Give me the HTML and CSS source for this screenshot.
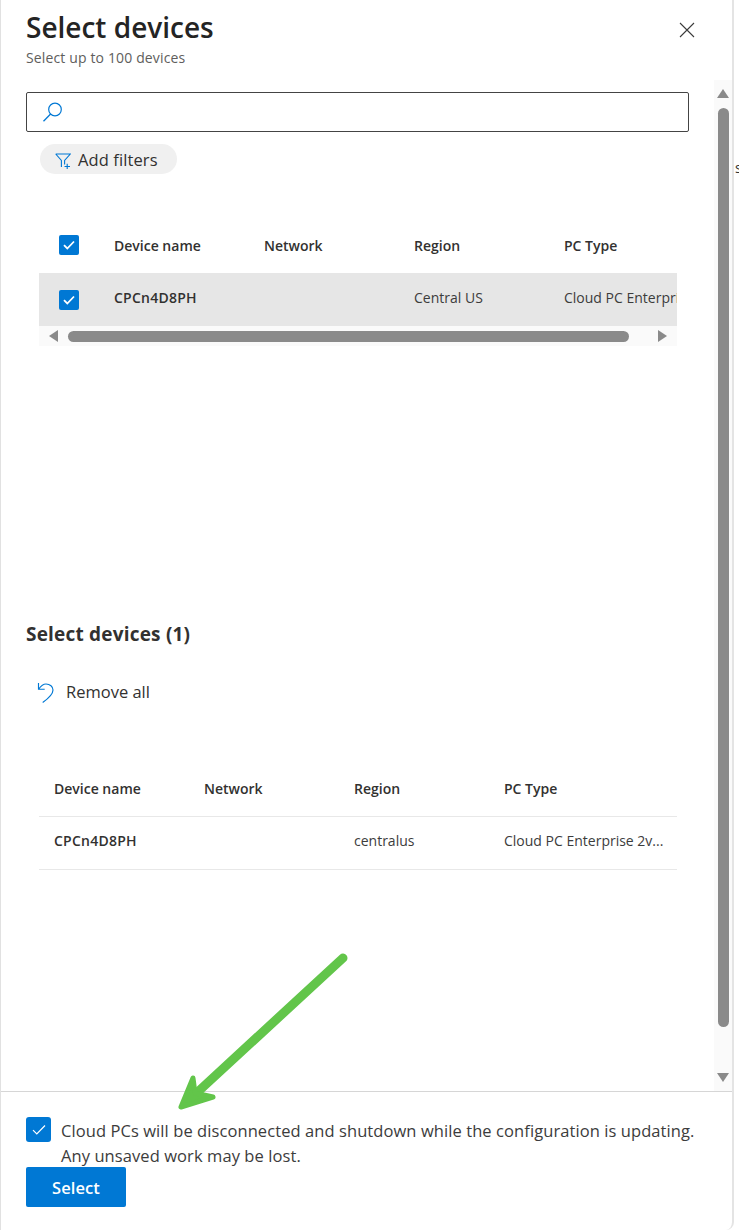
FILE: index.html
```html
<!DOCTYPE html>
<html lang="en">
<head>
<meta charset="utf-8">
<title>Select devices</title>
<link rel="stylesheet" href="styles.css">
</head>
<body>
<div class="page">
  <div class="panel">
    <header class="header">
      <div class="titles">
        <h1 class="title">Select devices</h1>
        <p class="subtitle">Select up to 100 devices</p>
      </div>
      <button class="close" aria-label="Close">
        <svg width="16" height="16" viewBox="0 0 16 16"><path d="M1 1l14 14M15 1L1 15" stroke="#3b3b3b" stroke-width="1.1" fill="none"/></svg>
      </button>
    </header>
    <div class="body">
      <main class="content">
        <div class="search">
          <svg class="search-icon" width="22" height="22" viewBox="0 0 22 22"><circle cx="13" cy="8.5" r="6.3" fill="none" stroke="#0078d4" stroke-width="1.2"/><path d="M8.6 13 1.5 20.3" stroke="#0078d4" stroke-width="1.3" fill="none"/></svg>
        </div>
        <button class="filter">
          <svg width="16" height="16" viewBox="0 0 16 16"><path d="M.7 1h14.6L9.6 7.4v4M6.4 13.9V7.4L.7 1" fill="none" stroke="#0078d4" stroke-width="1.1"/><path d="M9.5 13.500h5.500M12.200 10.800v5.200" stroke="#0078d4" stroke-width="1.1" fill="none"/></svg>
          <span>Add filters</span>
        </button>
        <div class="table top-table">
          <div class="row head-row">
            <span class="box"><svg width="12" height="10" viewBox="0 0 12 10"><path d="M1 5.200 4.300 8.500 11 1.500" fill="none" stroke="#fff" stroke-width="1.8"/></svg></span>
            <span class="cell name">Device name</span>
            <span class="cell">Network</span>
            <span class="cell">Region</span>
            <span class="cell">PC Type</span>
          </div>
          <div class="row data-row selected">
            <span class="box"><svg width="12" height="10" viewBox="0 0 12 10"><path d="M1 5.200 4.300 8.500 11 1.500" fill="none" stroke="#fff" stroke-width="1.8"/></svg></span>
            <span class="cell name strong">CPCn4D8PH</span>
            <span class="cell"></span>
            <span class="cell light">Central US</span>
            <span class="cell light clip">Cloud PC Enterprise 2vCPU/4GB/64GB</span>
          </div>
          <div class="hscroll">
            <span class="arrow-left"></span>
            <span class="hthumb"></span>
            <span class="arrow-right"></span>
          </div>
        </div>
        <h2 class="section">Select devices (1)</h2>
        <button class="remove">
          <svg width="18" height="21" viewBox="0 0 18 21"><path d="M1.500 1v6.200h6.200M1.700 7C4 3.800 6.500 2 9 2c4 0 7 2.800 7 6 0 3.500-4 8-10.300 12.500" fill="none" stroke="#0078d4" stroke-width="1.15"/></svg>
          <span>Remove all</span>
        </button>
        <div class="table bottom-table">
          <div class="row2 head2">
            <span class="cell">Device name</span>
            <span class="cell">Network</span>
            <span class="cell">Region</span>
            <span class="cell">PC Type</span>
          </div>
          <div class="row2 data2">
            <span class="cell strong">CPCn4D8PH</span>
            <span class="cell"></span>
            <span class="cell light">centralus</span>
            <span class="cell light">Cloud PC Enterprise 2v...</span>
          </div>
        </div>
      </main>
      <div class="vscroll">
        <span class="arrow-up"></span>
        <span class="vthumb"></span>
        <span class="arrow-down"></span>
      </div>
    </div>
    <footer class="footer">
      <div class="confirm">
        <span class="box big"><svg width="14" height="12" viewBox="0 0 14 12"><path d="M1 6.200 4.800 10 13 1.500" fill="none" stroke="#fff" stroke-width="1.2"/></svg></span>
        <p class="confirm-text">Cloud PCs will be disconnected and shutdown while the configuration is updating.<br>Any unsaved work may be lost.</p>
      </div>
      <button class="primary">Select</button>
    </footer>
    <svg class="callout" width="180" height="170" viewBox="0 0 180 170">
      <path d="M168 8 14 150" fill="none" stroke="#62c54a" stroke-width="9" stroke-linecap="round"/>
      <path d="M18 128 6 157 38 147 20 143Z" fill="#62c54a" stroke="#62c54a" stroke-width="5" stroke-linejoin="round"/>
    </svg>
  </div>
  <span class="stray">s</span>
</div>
</body>
</html>
```
FILE: styles.css
```css
* { box-sizing: border-box; }
html, body { margin: 0; padding: 0; }
body {
  background: #fff;
  font-family: "Open Sans", "Noto Sans", "Liberation Sans", sans-serif;
  color: #323130;
}
button { font-family: inherit; cursor: pointer; }
.page { position: relative; width: 739px; height: 1230px; overflow: hidden; }
.panel {
  position: relative;
  width: 734px;
  height: 1230px;
  background: #fff;
  border-left: 1px solid #e1e1e1;
  border-right: 2px solid #e4e4e4;
  border-bottom-right-radius: 8px;
  display: flex;
  flex-direction: column;
}
.header {
  height: 80px;
  flex: none;
  display: flex;
  justify-content: space-between;
  padding: 9px 37px 0 25px;
}
.title { margin: 0; font-size: 28px; line-height: 36px; font-weight: 600; color: #242424; }
.subtitle { margin: 3px 0 0; font-size: 14px; line-height: 20px; color: #605e5c; letter-spacing: 0.14px; }
.close { width: 16px; height: 16px; padding: 0; border: 0; background: none; margin-top: 13px; display: block; }
.close svg { display: block; }
.body { flex: none; height: 1011px; display: flex; }
.content { flex: none; width: 713px; padding: 12px 0 0 25px; }
.search {
  width: 663px;
  height: 40px;
  border: 1px solid #444;
  border-radius: 2px;
  display: flex;
  align-items: center;
  padding: 0 0 0 15px;
}
.search-icon { display: block; }
.filter {
  margin: 12px 0 0 14px;
  width: 137px;
  height: 30px;
  border: 0;
  border-radius: 15px;
  background: #f0f0f0;
  display: flex;
  align-items: center;
  gap: 7px;
  padding: 1px 0 0 15px;
  font-size: 16.5px;
  color: #323130;
  letter-spacing: 0.1px;
}
.filter svg { flex: none; margin-top: 2px; }
.table { margin-left: 13px; width: 638px; }
.top-table { margin-top: 44px; }
.row { display: grid; grid-template-columns: 75px 150px 150px 150px 113px; align-items: center; }
.head-row { height: 55px; padding-bottom: 2px; }
.head-row .cell { margin-top: 2px; }
.data-row { height: 53px; background: #e6e6e6; }
.data-row .cell { margin-bottom: 4px; }
.box {
  width: 20px;
  height: 20px;
  margin-left: 20px;
  border-radius: 2px;
  background: #0078d4;
  display: flex;
  align-items: center;
  justify-content: center;
}
.box svg { display: block; }
.cell { font-size: 14px; font-weight: 600; color: #323130; white-space: nowrap; }
.cell.strong { letter-spacing: 0.25px; }
.cell.light { font-weight: 400; color: #3c3c3c; }
.clip { overflow: hidden; }
.hscroll { height: 20px; background: #fafafa; display: flex; align-items: center; padding: 0 10px 0 10px; }
.arrow-left { width: 0; height: 0; border-style: solid; border-width: 6px 9px 6px 0; border-color: transparent #8a8a8a transparent transparent; }
.hthumb { flex: none; width: 561px; height: 11px; margin-left: 10px; background: #8a8a8a; border-radius: 6px; }
.arrow-right { width: 0; height: 0; margin-left: auto; border-style: solid; border-width: 6px 0 6px 9px; border-color: transparent transparent transparent #8a8a8a; }
.section { margin: 276px 0 0; font-size: 19px; line-height: 24px; font-weight: 700; color: #323130; letter-spacing: 0.2px; }
.remove {
  margin: 34px 0 0 11px;
  padding: 0;
  border: 0;
  background: none;
  display: flex;
  align-items: center;
  gap: 11px;
  font-size: 16.5px;
  line-height: 24px;
  color: #323130;
}
.remove svg { display: block; flex: none; }
.bottom-table { margin-top: 57px; }
.row2 { display: grid; grid-template-columns: 150px 150px 150px 188px; align-items: center; padding-left: 15px; border-bottom: 1px solid #e8e8e8; }
.head2 { height: 56px; padding-bottom: 1px; }
.data2 { height: 53px; }
.data2 .cell { margin-bottom: 5px; }
.vscroll { flex: none; position: relative; width: 18px; background: #fafafa; display: flex; flex-direction: column; align-items: center; }
.arrow-up { margin-top: 9px; width: 0; height: 0; border-style: solid; border-width: 0 6.5px 9px; border-color: transparent transparent #8a8a8a; }
.vthumb { width: 11px; height: 919px; margin-top: 10px; background: #8a8a8a; border-radius: 6px; }
.arrow-down { margin-top: auto; margin-bottom: 9px; width: 0; height: 0; border-style: solid; border-width: 9px 6.5px 0; border-color: #8a8a8a transparent transparent; }
.footer { flex: 1; border-top: 1px solid #d6d6d6; padding: 24px 0 0 25px; }
.confirm { display: flex; gap: 10px; }
.box.big { width: 25px; height: 25px; margin: 1px 0 0; flex: none; border-radius: 3px; }
.confirm-text { margin: 2px 0 0; font-size: 16.5px; line-height: 25px; color: #3c3c3c; letter-spacing: 0.08px; white-space: nowrap; }
.primary {
  display: block;
  margin-top: -1px;
  width: 100px;
  height: 40px;
  border: 0;
  border-radius: 2px;
  background: #0078d4;
  color: #fff;
  font-size: 16.5px;
  font-weight: 600;
  letter-spacing: 0.1px;
}
.callout { position: absolute; left: 174px; top: 950px; pointer-events: none; }
.stray { position: absolute; left: 735px; top: 158px; font-size: 14px; color: #333; }
```
